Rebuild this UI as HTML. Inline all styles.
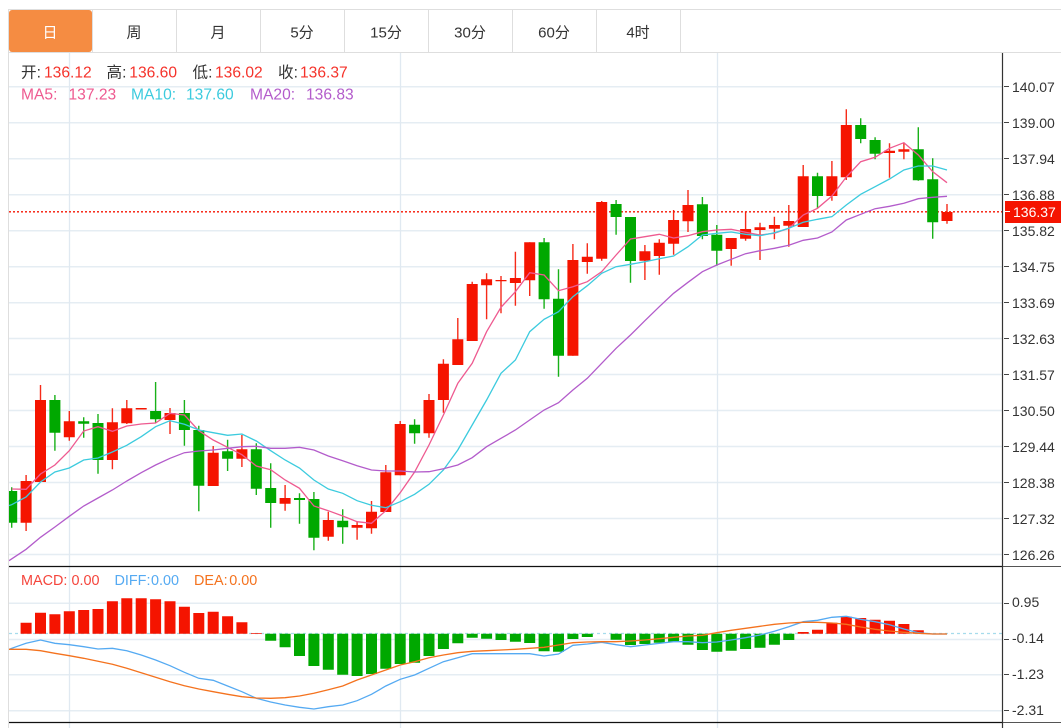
<!DOCTYPE html>
<html><head><meta charset="utf-8"><style>
html,body{margin:0;padding:0;background:#fff;width:1061px;height:728px;overflow:hidden}
svg{display:block;position:absolute;left:0;top:0}
text{font-family:"Liberation Sans","Noto Sans CJK SC",sans-serif;font-size:14px}
.t text{font-size:15px}
.l text{font-size:15.6px}
.m text{font-size:14.4px}
</style></head><body>
<svg width="1061" height="728" viewBox="0 0 1061 728" xmlns="http://www.w3.org/2000/svg">
<defs><clipPath id="c"><rect x="9" y="53" width="993" height="675"/></clipPath></defs>
<g fill="none" stroke="#e5edf3" stroke-width="1.5">
<path d="M9 86.7H1002M9 122.7H1002M9 158.7H1002M9 194.7H1002M9 230.7H1002M9 266.7H1002M9 302.7H1002M9 338.5H1002M9 374.5H1002M9 410.5H1002M9 446.5H1002M9 482.5H1002M9 518.5H1002M9 554.5H1002M9 603.3H1002M9 639.5H1002M9 674.7H1002M9 710.7H1002"/>
</g>
<path d="M69.5 53V728M400.5 53V728M717.5 53V728" stroke="#e0e9f1" stroke-width="1.3" fill="none"/>
<path d="M8.5 9V728M8 9.5H1061M8 52.5H1061" stroke="#dedede" fill="none"/>
<path d="M92.5 10V52M176.5 10V52M260.5 10V52M344.5 10V52M428.5 10V52M512.5 10V52M596.5 10V52M680.5 10V52" stroke="#dedede" fill="none"/>
<rect x="9" y="10" width="83" height="42" rx="3" fill="#f58c42"/>
<g class="t" text-anchor="middle" fill="#333">
<text x="50" y="37.500" fill="#fff">日</text>
<text x="134" y="37.500">周</text>
<text x="218" y="37.500">月</text>
<text x="302" y="37.500">5分</text>
<text x="386" y="37.500">15分</text>
<text x="470" y="37.500">30分</text>
<text x="554" y="37.500">60分</text>
<text x="638" y="37.500">4时</text>
</g>
<g clip-path="url(#c)" fill="none">
<path d="M9 211.800H1002" stroke="#f51400" stroke-dasharray="2 2" stroke-width="1.400"/>
<path stroke="#f51400" stroke-opacity=".9" stroke-width="1.4" d="M26.1 475V531M40.500 385V482M69.300 411V440.700M112.400 408.300V469.300M126.800 400V424M170 408V434M213.200 446V486M241.900 435V467M285.100 485V510.700M328.300 511.700V540.700M357.100 521.700V539.700M371.500 501V533.700M385.800 465V512M400.200 421V475.300M429 394V437.700M443.400 359.300V412.700M457.800 318V365M472.200 281.700V341M486.600 273.300V319.300M501 276V313.300M515.400 251.700V305.700M529.700 242.300V296M572.900 244V355.700M587.300 243.300V273.700M601.700 201V260.700M644.900 245V280M659.300 239.300V274.700M673.600 210V254.700M688 190V232M731.200 238V265.700M745.600 211.700V240.700M760 222.700V260M774.400 216.700V239.300M788.800 205V246.700M803.200 165V227M831.900 161V200.700M846.300 109.300V180M889.500 143.300V177.700M903.900 143V159.300M947 204V223.700"/>
<path stroke="#f51400" stroke-width="11" d="M26.100 481V522.700M40.500 400V482M69.300 421.300V437.300M112.400 422.300V460M126.800 408.300V423.300M141.200 408V409.500M170 413V420M213.200 452.700V486M241.900 449.300V458.700M285.100 498V503.700M328.300 520V536.700M357.100 525V527.700M371.500 511.700V528.300M385.800 472.300V512M400.200 424V475.300M429 400V433.300M443.400 363.700V400M457.800 339.300V365M472.200 284V341M486.600 279.300V285.300M501 280V281.200M515.400 278V283M529.700 242.300V280.300M572.900 260V355.700M587.300 256.700V262M601.700 202V258.700M644.900 251.300V260.700M659.300 242.700V256M673.600 220V243.700M688 205V221.300M731.200 238V249M745.600 229V238.700M760 227.300V230M774.400 225V228.700M788.800 221V225.700M803.200 176.300V227M831.900 176.300V196M846.300 125V177.300M889.500 150.700V153M903.900 149.300V151.700M947 212V221"/>
<path stroke="#00a800" stroke-opacity=".9" stroke-width="1.4" d="M11.700 487.300V527.700M54.900 395V450.700M83.700 417.300V437.700M98 414V473.700M155.600 382V423M184.400 400V445.700M198.800 425.700V511.300M227.600 439.700V471M256.300 443.300V495M270.700 463.300V527.700M299.500 493.300V523.700M313.900 492V550.300M342.700 509.300V543.700M414.600 419.300V443.700M544.100 238V308.700M558.500 269.300V376.700M616.100 200V234.700M630.500 217V282.700M702.400 197V239.300M716.800 225V265.700M817.500 172.700V208.300M860.700 118.300V143.300M875.100 137.300V159.300M918.300 127.300V180.700M932.700 158.300V238.700"/>
<path stroke="#00a800" stroke-width="11" d="M11.700 491V522.700M54.900 400V432.700M83.700 421.300V423.700M98 423V460M155.600 411V419.300M184.400 413V430M198.800 430V485.700M227.600 451.300V458.700M256.300 449.300V488.700M270.700 488V503M299.500 498V500M313.900 499V537.700M342.700 520.700V527.300M414.600 424.700V433.300M544.100 242.300V299.300M558.500 298.700V355.700M616.100 204V217M630.500 217V261M702.400 204.300V236M716.800 234.700V250.700M817.500 176.300V196M860.700 125V139M875.100 140V153.700M918.300 149.300V180.300M932.700 179.300V222.300"/>
<path stroke="#ee5a90" stroke-width="1.300" d="M11.700 489L26.100 489.300 40.500 474 54.900 465 69.300 450.700 83.700 431 98 426.700 112.400 431.300 126.800 426 141.200 424 155.600 423 170 413.300 184.400 415 198.800 430.700 213.200 440 227.600 447.300 241.900 454.700 256.300 466 270.700 469.700 285.100 480 299.500 488.300 313.900 506 328.300 510.700 342.700 516 357.100 521.700 371.500 523.300 385.800 510.700 400.200 492.700 414.600 472 429 445 443.400 415 457.800 383.300 472.200 363.300 486.600 331.700 501 307.300 515.400 291.700 529.700 272.700 544.100 275 558.500 290.700 572.900 286.700 587.300 281.700 601.700 271.700 616.100 255 630.500 239 644.900 236.700 659.300 234.300 673.600 238 688 235.700 702.400 231.700 716.800 230 731.200 229.300 745.600 232.300 760 235 774.400 233.300 788.800 228.300 803.200 215 817.500 208.300 831.900 196 846.300 177 860.700 161.700 875.100 157.300 889.500 148.300 903.900 142.700 918.300 155 932.700 171.700 947 182.700"/>
<path stroke="#3ccbde" stroke-width="1.300" d="M9 505.500L11.700 504.700 26.100 497 40.500 482 54.900 472 69.300 468 83.700 460 98 458 112.400 452 126.800 445.300 141.200 436.700 155.600 426.700 170 420.700 184.400 424.300 198.800 430 213.200 432.700 227.600 435.300 241.900 434 256.300 441 270.700 450.700 285.100 460 299.500 468 313.900 480 328.300 489 342.700 493.300 357.100 500.700 371.500 505.300 385.800 507.700 400.200 501.700 414.600 494.300 429 484.300 443.400 470 457.800 450 472.200 425 486.600 400 501 373.300 515.400 360 529.700 331.700 544.100 319.300 558.500 311.700 572.900 296.700 587.300 285.700 601.700 273.300 616.100 266.700 630.500 264.300 644.900 261.700 659.300 258.700 673.600 256 688 246.700 702.400 235 716.800 233.300 731.200 232 745.600 234.300 760 235.700 774.400 232.700 788.800 228.300 803.200 222.300 817.500 219.300 831.900 216.700 846.300 205 860.700 194.300 875.100 186.700 889.500 179 903.900 170 918.300 166 932.700 166 947 170"/>
<path stroke="#b35ccb" stroke-width="1.300" d="M9 560.700L26.100 549.300 40.500 537.300 54.900 527 69.300 516.300 83.700 506 98 498 112.400 490 126.800 481 141.200 472.700 155.600 465 170 458.300 184.400 452.700 198.800 451 213.200 450 227.600 448.300 241.900 446.700 256.300 446.300 270.700 448.300 285.100 448.300 299.500 447.300 313.900 450 328.300 456 342.700 460.700 357.100 465.700 371.500 470 385.800 471 400.200 471 414.600 472 429 471.700 443.400 468.700 457.800 465 472.200 457.700 486.600 446.700 501 438.300 515.400 430 529.700 420 544.100 410 558.500 402.700 572.900 390 587.300 378.300 601.700 363.300 616.100 348.300 630.500 335 644.900 320.700 659.300 306.700 673.600 293.300 688 282.300 702.400 271.700 716.800 265 731.200 259.300 745.600 253.700 760 250.700 774.400 248.300 788.800 245.300 803.200 240.300 817.500 238 831.900 232 846.300 220 860.700 214.300 875.100 208.700 889.500 206.300 903.900 203.300 918.300 198.700 932.700 197.300 947 196.300"/>
<path d="M9 633.500H1002" stroke="#a6dcec" stroke-dasharray="3 3" stroke-width="1.200"/>
<path stroke="#f51400" stroke-width="11" d="M26.100 622.700V633.700M40.500 612.700V633.700M54.900 614.300V633.700M69.300 611.300V633.700M83.700 610V633.700M98 609V633.700M112.400 601.300V633.700M126.800 598.300V633.700M141.200 598.300V633.700M155.600 599.300V633.700M170 601.300V633.700M184.400 606.700V633.700M198.800 613V633.700M213.200 611.700V633.700M227.600 616.300V633.700M241.900 622.300V633.700M256.300 633V633.700M803.200 632V633.700M817.500 629.700V633.700M831.900 622.700V633.700M846.300 616.700V633.700M860.700 618V633.700M875.100 619.700V633.700M889.500 620.700V633.700M903.900 624V633.700M918.300 630.300V633.700"/>
<path stroke="#00a800" stroke-width="11" d="M270.700 633.700V640.700M285.100 633.700V647.300M299.500 633.700V656M313.900 633.700V666M328.300 633.700V669.700M342.700 633.700V674.700M357.100 633.700V676M371.500 633.700V674M385.800 633.700V668.700M400.200 633.700V664M414.600 633.700V662.700M429 633.700V656M443.400 633.700V649M457.800 633.700V643.300M472.200 633.700V637.700M486.600 633.700V638.700M501 633.700V640M515.400 633.700V641.700M529.700 633.700V643M544.100 633.700V651.300M558.500 633.700V651.700M572.900 633.700V639M587.300 633.700V637M616.100 633.700V639.700M630.500 633.700V645M644.900 633.700V644M659.300 633.700V642.700M673.600 633.700V642M688 633.700V644.700M702.400 633.700V650M716.800 633.700V651.700M731.200 633.700V650.700M745.600 633.700V649M760 633.700V647.700M774.400 633.700V644.700M788.800 633.700V640"/>
<path stroke="#55aaf2" stroke-width="1.300" d="M9 649.500L11.700 648.300 26.100 643.300 40.500 640 54.900 643.300 69.300 644.700 83.700 646.700 98 649 112.400 648.300 126.800 650.700 141.200 655 155.600 660 170 665.700 184.400 672.300 198.800 678.300 213.200 680.300 227.600 686 241.900 691.700 256.300 698.300 270.700 702 285.100 705 299.500 707.300 313.900 709 328.300 706.700 342.700 705 357.100 700.700 371.500 694.300 385.800 686 400.200 679.300 414.600 675 429 668.300 443.400 661.700 457.800 657.700 472.200 653.700 486.600 653.700 501 653.700 515.400 653.700 529.700 653.700 544.100 656 558.500 654 572.900 645.300 587.300 644 601.700 642.300 616.100 644.700 630.500 646.700 644.900 645 659.300 643.300 673.600 641.700 688 641.700 702.400 642.700 716.800 642 731.200 640 745.600 637.700 760 635 774.400 631.300 788.800 626.700 803.200 621.700 817.500 620.300 831.900 617.300 846.300 616.300 860.700 619.300 875.100 621.700 889.500 624.700 903.900 629 918.300 632.700 932.700 634 947 634"/>
<path stroke="#f4721e" stroke-width="1.300" d="M9 649.300L26.100 649.300 40.500 650.700 54.900 653.300 69.300 655.700 83.700 658.300 98 661.300 112.400 664.300 126.800 668.300 141.200 672.700 155.600 677.300 170 681.700 184.400 685.700 198.800 689 213.200 691.700 227.600 694.300 241.900 696.700 256.300 698 270.700 698.300 285.100 697.700 299.500 696 313.900 693.300 328.300 689.700 342.700 686 357.100 680 371.500 675 385.800 670 400.200 665 414.600 661.700 429 657.700 443.400 655 457.800 652.700 472.200 651.300 486.600 650.700 501 650 515.400 649.300 529.700 648.300 544.100 647.300 558.500 645 572.900 642.700 587.300 642 601.700 641.700 616.100 641.700 630.500 641 644.900 640 659.300 638.700 673.600 637.300 688 636 702.400 635.300 716.800 632.700 731.200 630.300 745.600 628.300 760 626.300 774.400 624.300 788.800 623 803.200 622.300 817.500 622.300 831.900 623 846.300 624.300 860.700 627 875.100 629.300 889.500 631 903.900 632.300 918.300 633.300 932.700 634 947 634"/>
</g>
<path d="M9 566.500H1002M9 722.500H1002" stroke="#111" stroke-width="1.200" fill="none"/>
<path d="M1002 566.500H1061M1002 722.500H1061" stroke="#555" stroke-width="1" fill="none"/>
<path d="M1002.500 53V728" stroke="#333" stroke-width="1.200" fill="none"/>
<path d="M1004 86.500h5M1004 122.500h5M1004 158.500h5M1004 194.500h5M1004 230.500h5M1004 266.500h5M1004 302.500h5M1004 338.500h5M1004 374.500h5M1004 410.500h5M1004 446.500h5M1004 482.500h5M1004 518.500h5M1004 554.500h5M1004 603.500h5M1004 639.500h5M1004 674.500h5M1004 710.500h5" stroke="#444" fill="none"/>
<g fill="#333">
<text x="1012" y="92">140.07</text>
<text x="1012" y="128">139.00</text>
<text x="1012" y="164">137.94</text>
<text x="1012" y="200">136.88</text>
<text x="1012" y="236">135.82</text>
<text x="1012" y="272">134.75</text>
<text x="1012" y="308">133.69</text>
<text x="1012" y="344">132.63</text>
<text x="1012" y="380">131.57</text>
<text x="1012" y="416">130.50</text>
<text x="1012" y="452">129.44</text>
<text x="1012" y="488">128.38</text>
<text x="1012" y="524">127.32</text>
<text x="1012" y="560">126.26</text>
<text x="1012" y="607">0.95</text>
<text x="1012" y="643">-0.14</text>
<text x="1012" y="679">-1.23</text>
<text x="1012" y="715">-2.31</text>
</g>
<rect x="1005" y="201" width="56" height="22" fill="#f51400"/>
<path d="M1005 211.500h5" stroke="#fff"/>
<text x="1013" y="217" fill="#fff">136.37</text>
<g class="l">
<text x="21" y="77.500" fill="#333">开:</text><text x="44" y="77.500" fill="#f5322a">136.12</text>
<text x="106.500" y="77.500" fill="#333">高:</text><text x="129.300" y="77.500" fill="#f5322a">136.60</text>
<text x="192.500" y="77.500" fill="#333">低:</text><text x="215" y="77.500" fill="#f5322a">136.02</text>
<text x="278" y="77.500" fill="#333">收:</text><text x="300" y="77.500" fill="#f5322a">136.37</text>
<text x="21" y="99.300" fill="#ee5a90">MA5:</text><text x="68.500" y="99.300" fill="#ee5a90">137.23</text>
<text x="131" y="99.300" fill="#3ccbde">MA10:</text><text x="186" y="99.300" fill="#3ccbde">137.60</text>
<text x="250" y="99.300" fill="#b35ccb">MA20:</text><text x="306" y="99.300" fill="#b35ccb">136.83</text>
</g>
<g class="m">
<text x="21" y="585" fill="#f5453c">MACD:</text><text x="71.500" y="585" fill="#f5453c">0.00</text>
<text x="114.500" y="585" fill="#55aaf2">DIFF:</text><text x="151" y="585" fill="#55aaf2">0.00</text>
<text x="194" y="585" fill="#f4721e">DEA:</text><text x="229.300" y="585" fill="#f4721e">0.00</text>
</g>
</svg>
</body></html>
